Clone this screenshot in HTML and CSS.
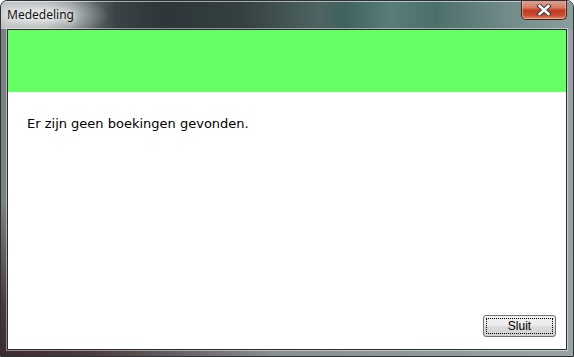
FILE: index.html
```html
<!DOCTYPE html>
<html lang="nl">

<head>
  <meta charset="UTF-8">
  <meta name="viewport" content="width=device-width, initial-scale=1.0">
  <title>Mededeling</title>
  <link rel="stylesheet" href="styles.css">
</head>

<body>
  <div class="window">
    <div class="titlebar">
      <span class="title">Mededeling</span>
      <div class="close">
        <svg width="16" height="12" viewBox="0 0 16 12">
          <path d="M3.5 2 L12.5 10 M12.5 2 L3.5 10" stroke="#3a3f4a" stroke-width="4.4" stroke-linecap="square" fill="none" />
          <path d="M3.5 2 L12.5 10 M12.5 2 L3.5 10" stroke="#fff" stroke-width="2.4" stroke-linecap="square" fill="none" />
        </svg>
      </div>
    </div>
    <div class="frame">
      <div class="client">
        <div class="banner"></div>
        <p class="message">Er zijn geen boekingen gevonden.</p>
        <div class="footer">
          <button class="btn"><span>Sluit</span></button>
        </div>
      </div>
    </div>
  </div>
</body>

</html>
```

FILE: styles.css
```css
* {
  margin: 0;
  padding: 0;
  box-sizing: border-box;
}

html,
body {
  width: 574px;
  height: 357px;
  overflow: hidden;
  background: #fff;
}

.window {
  width: 574px;
  height: 357px;
  display: flex;
  flex-direction: column;
  border: 1px solid #2c3335;
  border-radius: 7px 7px 0 0;
  overflow: hidden;
  background: linear-gradient(to right, #7c8184 0%, #8a8f91 50%, #97a4a3 100%);
}

.titlebar {
  height: 28px;
  display: flex;
  align-items: flex-start;
  justify-content: space-between;
  padding-left: 6px;
  background:
    radial-gradient(ellipse 70px 22px at 38px 14px, rgba(235, 238, 238, 0.9), rgba(235, 238, 238, 0) 100%),
    linear-gradient(to right, #b4b8b9 0%, #9ea3a4 8%, #858b8c 12%, #3a4346 20%, #2d3639 28%, #34403f 42%, #4e6563 56%, #3f6260 60%, #5a7c7a 68%, #4d6f6c 76%, #6f8a88 88%, #8a9e9c 100%);
  box-shadow: inset 0 1px 0 rgba(255, 255, 255, 0.55);
}

.title {
  margin-top: 6px;
  font-family: "Noto Sans", "Liberation Sans", sans-serif;
  font-size: 12px;
  line-height: 16px;
  color: #141414;
  text-shadow: 0 0 6px #fff, 0 0 10px #fff;
}

.close {
  width: 46px;
  height: 20px;
  margin-right: 6px;
  margin-top: -1px;
  display: flex;
  align-items: center;
  justify-content: center;
  border: 1px solid #4a2018;
  border-top: none;
  border-radius: 0 0 5px 5px;
  background: linear-gradient(to bottom, #e0a596 0%, #d47c66 40%, #c2391f 55%, #c84a30 80%, #e0866c 100%);
  box-shadow: inset 0 0 0 1px rgba(255, 220, 210, 0.45);
}

.frame {
  flex: 1;
  display: flex;
  padding: 0 6px 6px 6px;
  background: linear-gradient(to top right, #3e2b2f 0%, #4a3a3d 8%, rgba(80, 70, 72, 0) 24%);
}

.client {
  flex: 1;
  display: flex;
  flex-direction: column;
  background: #fff;
  border: 1px solid #2a2e30;
  box-shadow: 0 0 0 1px rgba(255, 255, 255, 0.45);
}

.banner {
  height: 62px;
  background: #66ff66;
}

.message {
  padding: 24px 0 0 19px;
  font-family: "DejaVu Sans", Verdana, sans-serif;
  font-size: 13px;
  line-height: 16px;
  color: #000;
}

.footer {
  flex: 1;
  display: flex;
  align-items: flex-end;
  justify-content: flex-end;
  padding: 0 10px 12px 0;
}

.btn {
  width: 73px;
  height: 22px;
  padding: 2px;
  border: 1px solid #707070;
  border-radius: 3px;
  background: linear-gradient(to bottom, #f2f2f2 0%, #ebebeb 48%, #dddddd 52%, #cfcfcf 100%);
  font-family: "Liberation Sans", Arial, sans-serif;
  font-size: 12px;
  color: #000;
}

.btn span {
  display: flex;
  align-items: center;
  justify-content: center;
  height: 100%;
  border: 1px dotted #000;
}
```
